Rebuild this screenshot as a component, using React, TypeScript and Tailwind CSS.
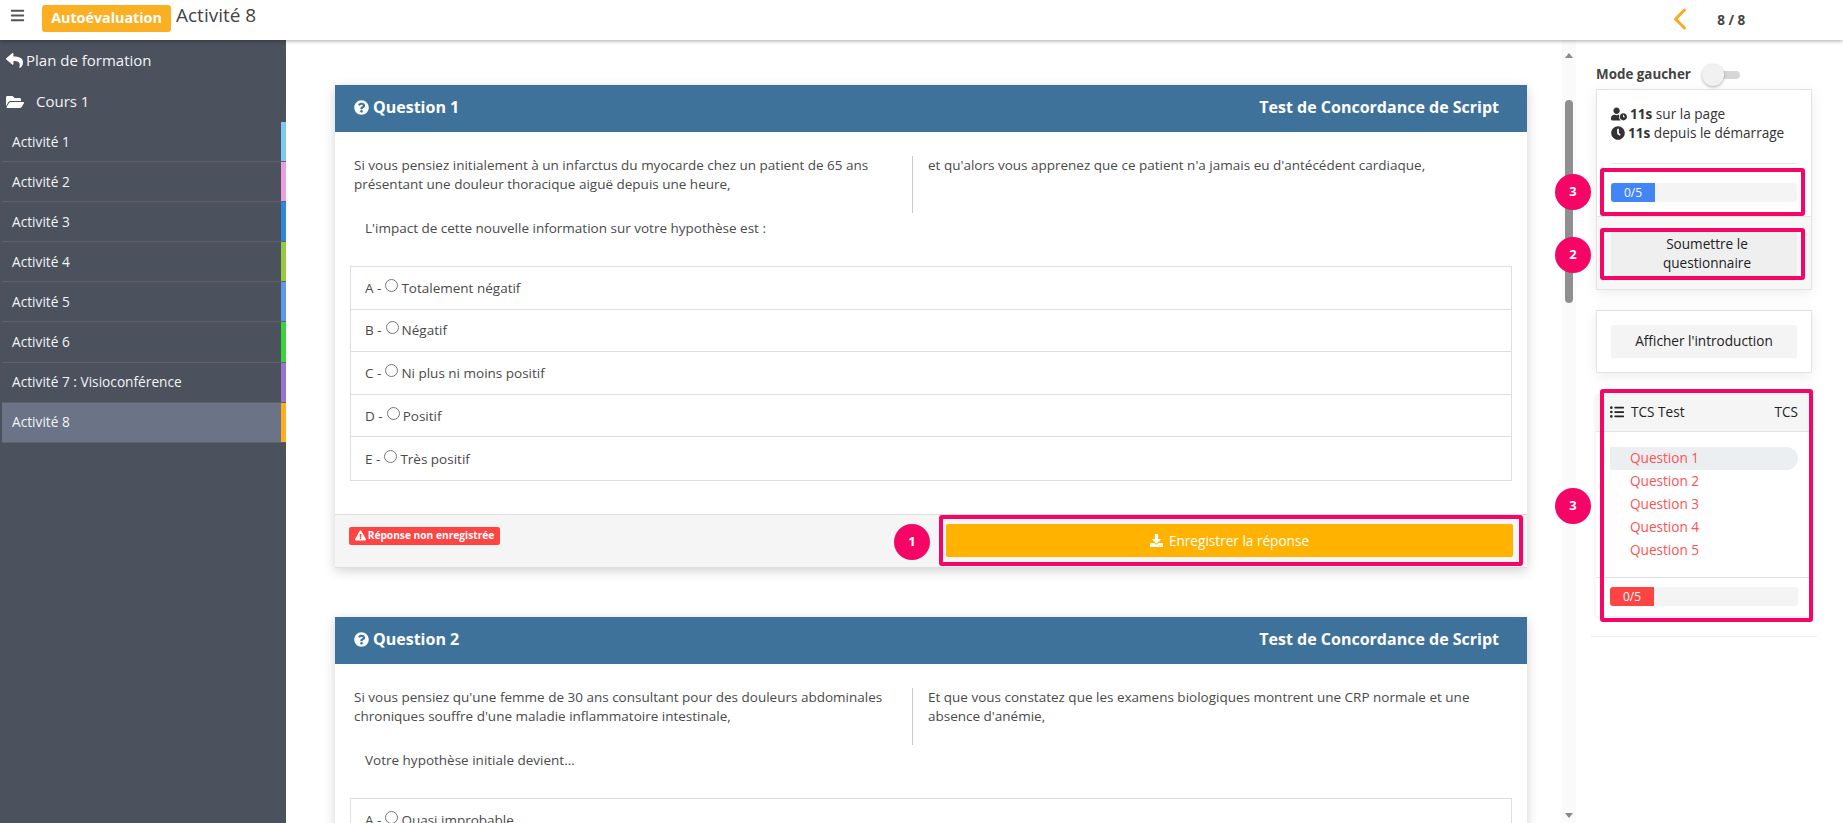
import type { ReactNode } from 'react'
import {
  FaBars,
  FaClock,
  FaDownload,
  FaExclamationTriangle,
  FaFolderOpen,
  FaListUl,
  FaQuestionCircle,
  FaReply,
  FaUserClock,
} from 'react-icons/fa'
import { ChevronLeft } from 'lucide-react'

const activities = [
  { label: 'Activité 1', strip: 'bg-[#7fc8f2]' },
  { label: 'Activité 2', strip: 'bg-[#ec9fdc]' },
  { label: 'Activité 3', strip: 'bg-[#2f86e0]' },
  { label: 'Activité 4', strip: 'bg-[#96c93d]' },
  { label: 'Activité 5', strip: 'bg-[#5f96ee]' },
  { label: 'Activité 6', strip: 'bg-[#3ad53a]' },
  { label: 'Activité 7 : Visioconférence', strip: 'bg-[#9575cd]' },
  { label: 'Activité 8', strip: 'bg-[#ffae20]', active: true },
]

function Sidebar() {
  return (
    <aside className="flex w-[286px] shrink-0 flex-col bg-[#4b515d] text-[#f3f4f6]">
      <div className="flex h-[41px] items-center pl-[6px] text-[15px]">
        <FaReply className="mr-[3px] text-[17px] text-white" />
        Plan de formation
      </div>
      <div className="flex h-[41px] items-center pl-[6px] text-[15px]">
        <FaFolderOpen className="mr-[12px] text-[18px] text-white" />
        Cours 1
      </div>
      {activities.map((a) => (
        <div
          key={a.label}
          className={`ml-[2px] flex h-[40.1px] items-stretch border-b border-[#5f6166] text-[13.7px] ${a.active ? 'bg-[#6b7386]' : ''}`}
        >
          <span className="flex flex-1 items-center pl-[10px] pt-[1px]">{a.label}</span>
          <span className={`w-[5px] ${a.strip}`} />
        </div>
      ))}
    </aside>
  )
}

function PinkCircle({ n, className }: { n: number; className: string }) {
  return (
    <span
      className={`absolute z-20 flex h-[36px] w-[36px] items-center justify-center rounded-full bg-[#f50565] text-[13px] font-bold text-white ${className}`}
    >
      {n}
    </span>
  )
}

function PinkFrame({ className }: { className: string }) {
  return <span className={`pointer-events-none absolute z-10 rounded-[3px] border-4 border-[#f50565] ${className}`} />
}

function QuestionCard({
  title,
  left,
  right,
  prompt,
  options,
  footer,
}: {
  title: string
  left: ReactNode
  right: ReactNode
  prompt: string
  options: string[]
  footer?: boolean
}) {
  return (
    <section className="mb-[49px] w-[1192px] shrink-0 rounded-t-[2px] bg-white text-[13.5px] leading-[19px] text-[#4a4a4a] shadow-[0_3px_12px_rgba(0,0,0,0.18)]">
      <header className="flex h-[47px] items-center justify-between bg-[#3f729b] pb-[2px] pl-[19px] pr-[28px] text-[16px] font-bold text-white">
        <span className="flex items-center gap-[4px]">
          <FaQuestionCircle className="text-[15px]" />
          {title}
        </span>
        <span>Test de Concordance de Script</span>
      </header>
      <div className="flex pl-[19px] pt-[24px]">
        <p className="h-[57px] w-[558px] pr-[10px]">{left}</p>
        <p className="h-[57px] w-[590px] border-l border-[#c9c9c9] pl-[15px]">{right}</p>
      </div>
      <p className="pl-[30px] pt-[6px]">{prompt}</p>
      <ul className="mx-[15px] mt-[28px] border border-[#dedede]">
        {options.map((o, i) => (
          <li
            key={o}
            className="flex h-[42.6px] items-center border-b border-[#dedede] pl-[14px] pt-[1px] last:border-b-0"
          >
            {String.fromCharCode(65 + i)} -
            <span className="relative top-[-3px] ml-[4px] mr-[3px] inline-block h-[13px] w-[13px] rounded-full border border-[#767676] bg-white" />
            {o}
          </li>
        ))}
      </ul>
      {footer && (
        <footer className="mt-[33px] flex h-[54px] items-start border-y border-[#dedede] bg-[#f5f5f5] pl-[14px]">
          <span className="mt-[12px] flex h-[18px] w-[151px] items-center justify-center gap-[2px] rounded-[2px] bg-[#ff4444] text-[10.2px] font-bold text-white">
            <FaExclamationTriangle className="text-[11px]" />
            Réponse non enregistrée
          </span>
          <div className="relative ml-[446px] mt-[9px]">
            <PinkCircle n={1} className="left-[-52px] top-0" />
            <PinkFrame className="bottom-[-9px] left-[-7px] right-[-10px] top-[-9px]" />
            <button className="flex h-[33px] w-[567px] items-center justify-center gap-[6px] rounded-[2px] bg-[#ffb300] text-[13.6px] text-white">
              <FaDownload className="text-[13px]" />
              Enregistrer la réponse
            </button>
          </div>
        </footer>
      )}
    </section>
  )
}

function QuestionList() {
  return (
    <main className="flex min-w-0 flex-1 flex-col overflow-hidden pl-[49px] pt-[45px]">
      <QuestionCard
        title="Question 1"
        left="Si vous pensiez initialement à un infarctus du myocarde chez un patient de 65 ans présentant une douleur thoracique aiguë depuis une heure,"
        right="et qu'alors vous apprenez que ce patient n'a jamais eu d'antécédent cardiaque,"
        prompt="L'impact de cette nouvelle information sur votre hypothèse est :"
        options={['Totalement négatif', 'Négatif', 'Ni plus ni moins positif', 'Positif', 'Très positif']}
        footer
      />
      <QuestionCard
        title="Question 2"
        left="Si vous pensiez qu'une femme de 30 ans consultant pour des douleurs abdominales chroniques souffre d'une maladie inflammatoire intestinale,"
        right="Et que vous constatez que les examens biologiques montrent une CRP normale et une absence d'anémie,"
        prompt="Votre hypothèse initiale devient..."
        options={['Quasi improbable', 'Improbable']}
      />
    </main>
  )
}

function Scrollbar() {
  return (
    <div className="flex w-[14px] shrink-0 flex-col items-center bg-[#fafafa] pt-[13px]">
      <span className="h-0 w-0 border-x-[4px] border-b-[5px] border-x-transparent border-b-[#8a8a8a]" />
      <span className="mt-[42px] h-[203px] w-[8px] rounded-full bg-[#8f8f8f]" />
      <span className="mt-auto mb-[5px] h-0 w-0 border-x-[4px] border-t-[5px] border-x-transparent border-t-[#8a8a8a]" />
    </div>
  )
}

function RightPanel() {
  return (
    <aside className="flex w-[267px] shrink-0 flex-col pl-[20px] text-[13.6px] text-[#333]">
      <div className="flex h-[49px] shrink-0 items-center pt-[20px] text-[13.4px] font-bold text-[#444]">
        Mode gaucher
        <span className="relative ml-[15px] h-[8px] w-[34px] rounded-full bg-[#d6d6d6]">
          <span className="absolute left-[-4px] top-[-7px] h-[22px] w-[22px] rounded-full bg-[#f1f1f1] shadow-[0_1px_3px_rgba(0,0,0,0.3)]" />
        </span>
      </div>

      <section className="w-[216px] border border-[#e3e3e3] bg-white shadow-[0_3px_12px_rgba(0,0,0,0.08)]">
        <div className="mx-[14px] h-[74px] border-b border-[#e6e6e6] pt-[14px] leading-[19px]">
          <div className="flex items-center gap-[3px]">
            <FaUserClock className="text-[16px] text-[#333]" />
            <span><b>11s</b> sur la page</span>
          </div>
          <div className="flex items-center gap-[3px]">
            <FaClock className="text-[14px] text-[#333]" />
            <span><b>11s</b> depuis le démarrage</span>
          </div>
        </div>
        <div className="relative mx-[14px] mb-[14px] mt-[19px] flex h-[19px] rounded-[3px] bg-[#f4f4f4]">
          <PinkFrame className="bottom-[-14px] left-[-11px] right-[-8px] top-[-15px]" />
          <PinkCircle n={3} className="left-[-56px] top-[-9px]" />
          <span className="flex w-[44px] items-center justify-center rounded-l-[3px] bg-[#4285f4] text-[12px] text-white">0/5</span>
        </div>
        <div className="border-t border-[#e6e6e6] bg-[#f7f7f7] px-[14px] pb-[13px] pt-[15px]">
          <div className="relative">
            <PinkFrame className="bottom-[-4px] left-[-11px] right-[-8px] top-[-4px]" />
            <PinkCircle n={2} className="left-[-56px] top-[5px]" />
            <button className="block h-[44px] w-full bg-[#efefef] pb-[2px] pl-[31px] pr-[25px] text-center leading-[19px] text-[#222]">
              Soumettre le questionnaire
            </button>
          </div>
        </div>
      </section>

      <section className="mt-[20px] w-[216px] border border-[#e3e3e3] bg-white p-[14px] shadow-[0_3px_12px_rgba(0,0,0,0.08)]">
        <button className="block h-[33px] w-full rounded-[2px] bg-[#f4f4f4] text-[#222]">Afficher l&apos;introduction</button>
      </section>

      <section className="relative mt-[21px] w-[216px] bg-white shadow-[0_1px_4px_rgba(0,0,0,0.1)]">
        <PinkFrame className="bottom-[-6px] left-[4px] right-[-1px] top-[-5px]" />
        <PinkCircle n={3} className="left-[-41px] top-[94px]" />
        <header className="flex h-[38px] items-center justify-between border-b border-[#e3e3e3] bg-[#f5f5f5] px-[14px] text-[#222]">
          <span className="flex items-center gap-[7px]">
            <FaListUl className="text-[14px]" />
            TCS Test
          </span>
          <span>TCS</span>
        </header>
        <ul className="mx-[14px] h-[145px] pt-[15px] text-[#ff5252]">
          {[1, 2, 3, 4, 5].map((n) => (
            <li
              key={n}
              className={`flex h-[23px] items-center rounded-r-full pl-[20px] ${n === 1 ? 'bg-[#eceff1]' : ''}`}
            >
              Question {n}
            </li>
          ))}
        </ul>
        <div className="border-t border-[#e3e3e3] px-[14px] pb-[10px] pt-[9px]">
          <div className="flex h-[19px] rounded-[3px] bg-[#f4f4f4]">
            <span className="flex w-[44px] items-center justify-center rounded-l-[3px] bg-[#ff4444] text-[12px] text-white">0/5</span>
          </div>
        </div>
      </section>
      <hr className="ml-[-5px] mt-[20px] w-[226px] border-[#eeeeee]" />
    </aside>
  )
}

export default function App() {
  return (
    <div className="flex h-[823px] w-[1843px] flex-col overflow-hidden bg-white font-['Open_Sans','Noto_Sans',sans-serif]">
      <header className="relative z-30 flex h-[40px] shrink-0 items-center bg-white shadow-[0_1px_4px_rgba(0,0,0,0.35)]">
        <FaBars className="ml-[10px] mt-[-9px] text-[15px] text-[#555]" />
        <span className="ml-[17px] mt-[-4px] flex h-[27px] w-[129px] items-center justify-center rounded-[3px] bg-[#fbb024] text-[14.3px] font-bold text-white">
          Autoévaluation
        </span>
        <span className="ml-[5px] mt-[-10px] text-[19px] text-[#444]">Activité 8</span>
        <ChevronLeft className="ml-[1406px] mt-[-2px] text-[#ffa726]" size={36} strokeWidth={2} />
        <span className="ml-[19px] text-[13.5px] font-bold text-[#444]">8 / 8</span>
      </header>
      <div className="flex min-h-0 flex-1">
        <Sidebar />
        <QuestionList />
        <Scrollbar />
        <RightPanel />
      </div>
    </div>
  )
}
